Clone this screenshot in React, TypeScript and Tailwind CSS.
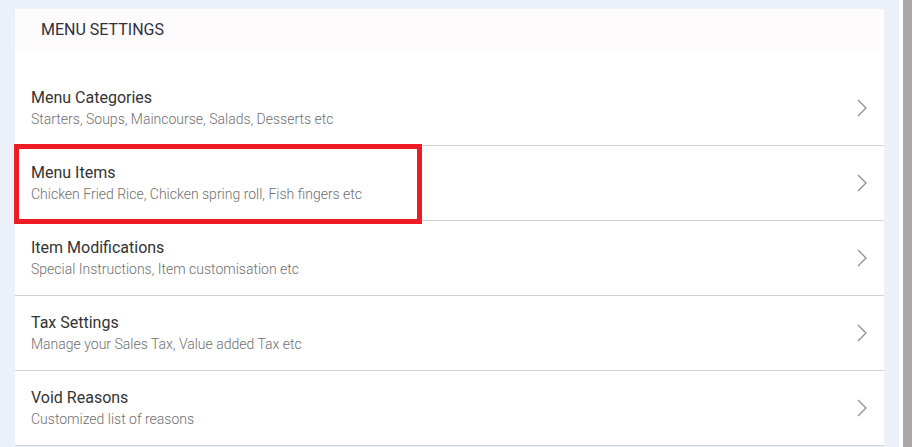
const items = [
  { title: 'Menu Categories', sub: 'Starters, Soups, Maincourse, Salads, Desserts etc' },
  { title: 'Menu Items', sub: 'Chicken Fried Rice, Chicken spring roll, Fish fingers etc', marked: true },
  { title: 'Item Modifications', sub: 'Special Instructions, Item customisation etc' },
  { title: 'Tax Settings', sub: 'Manage your Sales Tax, Value added Tax etc' },
  { title: 'Void Reasons', sub: 'Customized list of reasons' },
];

function Chevron() {
  return (
    <svg width="10" height="18" viewBox="0 0 10 18" fill="none" className="shrink-0">
      <path d="M1 1 L9 9 L1 17" stroke="#8a8a8a" strokeWidth="1.2" />
    </svg>
  );
}

export default function App() {
  return (
    <div className="flex h-[447px] w-[912px] overflow-hidden bg-[#ecf0f8] font-['Roboto',sans-serif]">
      <div className="flex-1 pl-[15px] pr-[15px] pt-[9px]">
        <div className="bg-white">
          <div className="flex h-[42px] items-center bg-[#fdfbfc] pl-[26px] text-[16px] text-[#2f3040]">
            MENU SETTINGS
          </div>
          <div className="pt-[20px]">
            {items.map((item) => (
              <div
                key={item.title}
                className="relative flex h-[75px] items-center justify-between border-b border-[#d2d2d2] pl-4 pr-[17px]"
              >
                <div className="pb-[1px]">
                  <div className="text-[16px] leading-[22px] text-[#333333]">{item.title}</div>
                  <div className="text-[14px] font-light leading-[20px] text-[#6f6f6f]">{item.sub}</div>
                </div>
                <Chevron />
                {item.marked && (
                  <div className="absolute left-[-1px] top-[-2px] h-[80px] w-[408px] border-[5px] border-[#ed1c24]" />
                )}
              </div>
            ))}
          </div>
        </div>
      </div>
      <div className="flex w-[13px] shrink-0">
        <div className="w-[4px] bg-white" />
        <div className="flex-1 bg-[#a8a8a8]" />
      </div>
    </div>
  );
}
